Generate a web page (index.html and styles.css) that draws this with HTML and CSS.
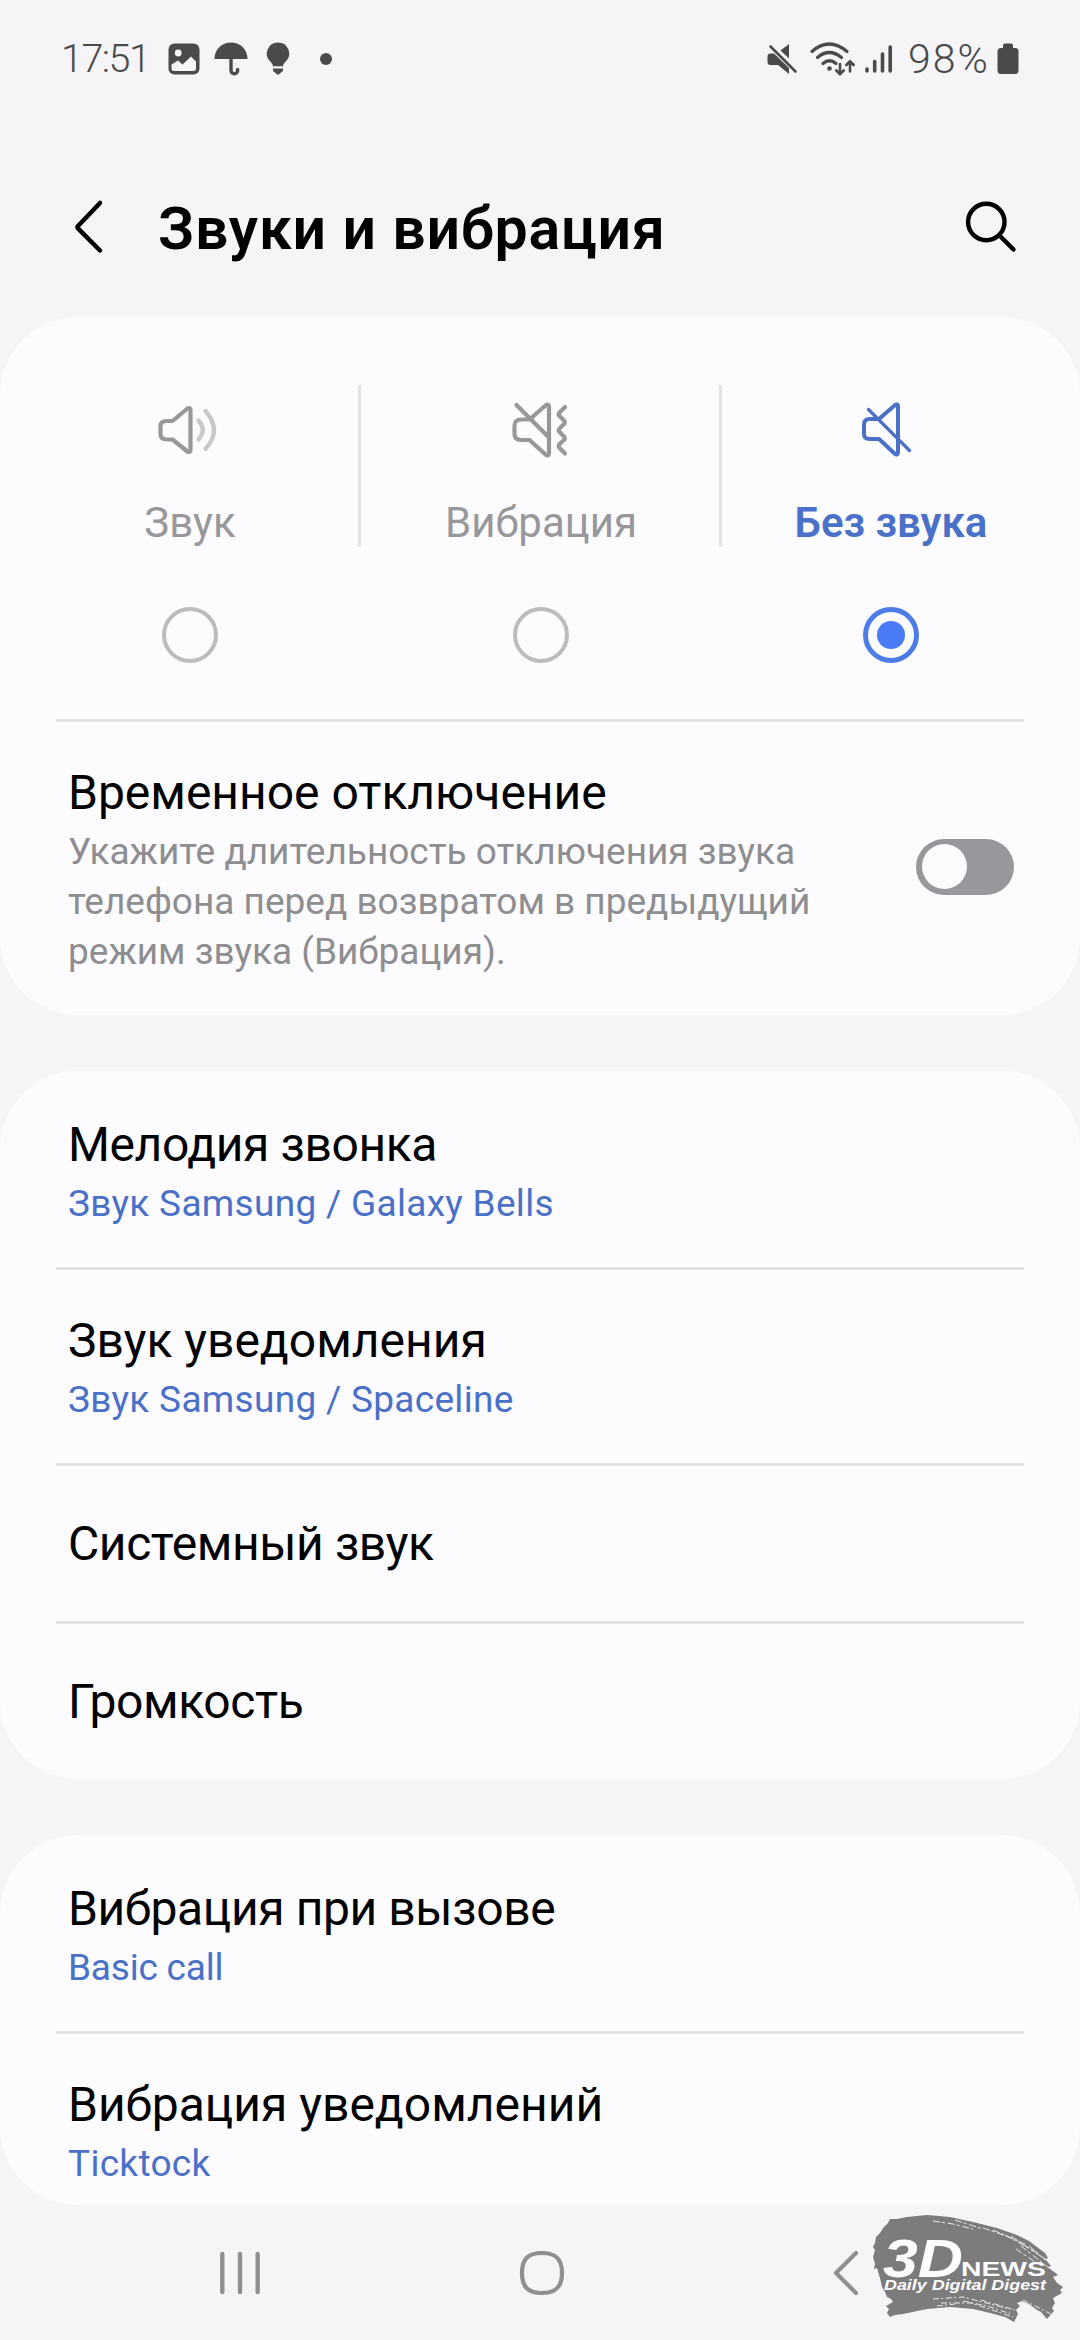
FILE: index.html
```
<!DOCTYPE html>
<html lang="ru">
<head>
    <meta charset="UTF-8">
    <meta name="viewport" content="width=device-width, initial-scale=1.0">
    <title>Звуки и вибрация</title>
    <link rel="stylesheet" href="styles.css">
</head>
<body>
    <div class="status-bar">
        <div class="status-left">
            <span class="status-time">17:51</span>
            <svg class="icon-image" width="32" height="32" viewBox="0 0 32 32">
                <rect x="0.5" y="0.5" width="31" height="31" rx="6" fill="#4a4a4a"/>
                <circle cx="10.2" cy="10" r="3.4" fill="#f5f5f7"/>
                <path d="M3.5 21.5L10 17.500l4.500 4L23 13.500l5 5v7a2.500 2.500 0 0 1-2.500 2.500h-19.500a2.500 2.500 0 0 1-2.500-2.500z" fill="#f5f5f7"/>
            </svg>
            <svg class="icon-umbrella" width="34" height="34" viewBox="0 0 34 34">
                <path d="M0.500 17C0.500 7 8 0.500 17 0.500S33.500 7 33.500 17z" fill="#4a4a4a"/>
                <path d="M17 16v12.500a3.300 3.300 0 0 0 6.600 0v-1" fill="none" stroke="#4a4a4a" stroke-width="3.4" stroke-linecap="round"/>
            </svg>
            <svg class="icon-bulb" width="24" height="34" viewBox="0 0 24 34">
                <path d="M12 0.500a11 11 0 0 1 7.500 19.200q-2.500 2.300-2.500 4.500H7q0-2.200-2.500-4.500A11 11 0 0 1 12 0.500z" fill="#4a4a4a"/>
                <path d="M7 26.500h10v2.500l-5 4-5-4z" fill="#4a4a4a"/>
            </svg>
            <span class="status-dot"></span>
        </div>
        <div class="status-right">
            <svg class="icon-muted" width="32" height="32" viewBox="0 0 32 32">
                <path d="M0.500 13.500q0-3 3-3H7L22 25v6L11 22H3.500q-3 0-3-3zM13.500 7.500L22 1v14.500z" fill="#4a4a4a"/>
                <path d="M3.500 3.500L28.500 28.500" stroke="#4a4a4a" stroke-width="2.600" stroke-linecap="round"/>
            </svg>
            <svg class="icon-wifi" width="46" height="34" viewBox="0 0 46 34" fill="none" stroke="#4a4a4a" stroke-width="3.200" stroke-linecap="round">
                <path d="M2 9.500Q19-5.500 37 9.500M7.500 15.500Q19 5.500 31.500 15.500M13 21.500Q19.500 16 26 21.500"/>
                <circle cx="19.500" cy="26.500" r="2.300" fill="#4a4a4a" stroke="none"/>
                <path d="M30 22v10M26.300 28.500l3.700 3.700 3.700-3.700M40 29.500V19.500M36.300 23l3.700-3.700L43.700 23" stroke-width="2.600"/>
            </svg>
            <svg class="icon-signal" width="28" height="32" viewBox="0 0 28 32" fill="none" stroke="#4a4a4a" stroke-width="3.600" stroke-linecap="round">
                <path d="M2 26v2M9.700 18.500V28M17.500 11v17M25.200 4v24"/>
            </svg>
            <span class="status-percent">98%</span>
            <svg class="icon-battery" width="22" height="32" viewBox="0 0 22 32">
                <path d="M6 2.500Q6 0.500 8 0.500h6Q16 0.500 16 2.500V5H18Q21.500 5 21.500 8.500V27.500Q21.500 31 18 31H4Q0.500 31 0.500 27.500V8.500Q0.500 5 4 5h2z" fill="#4a4a4a"/>
            </svg>
        </div>
    </div>

    <header>
        <svg class="icon-back" width="30" height="54" viewBox="0 0 30 54" fill="none" stroke="#000" stroke-width="4.500" stroke-linecap="round" stroke-linejoin="round">
            <path d="M26 3L4 26q-1 1.200 0 2.400L26 50.500"/>
        </svg>
        <h1>Звуки и вибрация</h1>
        <svg class="icon-search" width="52" height="52" viewBox="0 0 52 52" fill="none" stroke="#000" stroke-width="4.400" stroke-linecap="round">
            <circle cx="21.300" cy="21" r="18.200"/>
            <path d="M35 35l13.500 13.500"/>
        </svg>
    </header>

    <main>
        <section class="card">
            <div class="modes">
                <div class="mode">
                    <svg class="mode-icon" width="60" height="60" viewBox="0 0 60 60" fill="none" stroke="#98989c" stroke-width="4.200" stroke-linecap="round" stroke-linejoin="round">
                        <path d="M12.500 21H7Q0.500 21 0.500 26v8q0 5.500 6.500 5.500h5.500L27.500 51.500Q30.500 53 30.500 50V10Q30.500 7 27.500 8.500z"/>
                        <path d="M38.500 20.500q8.500 9.500 0 19M45.500 11q17 19 0 38" stroke="#c8c8cb"/>
                    </svg>
                    <span class="mode-label">Звук</span>
                    <span class="radio"></span>
                </div>
                <div class="mode-divider"></div>
                <div class="mode">
                    <svg class="mode-icon" width="60" height="60" viewBox="0 0 60 60" fill="none" stroke="#98989c" stroke-width="4.200" stroke-linecap="round" stroke-linejoin="round">
                        <path d="M18.500 19.500H10Q3.500 19.500 3.500 26v7.500q0 6.500 6.500 6.500h8.500L34.500 54.500Q38 57 38 53V7q0-4-3.500-1.500zM5.500 5L38 37.500"/>
                        <path d="M54 7l-5.500 5.500q-1.500 1.800 0 3.500L53 20.500q1.500 2 0 3.500L48.500 28.500q-1.500 2 0 3.500L53 36.500q1.500 2 0 3.500L48.500 44q-1.500 2 0 4L54 53.500"/>
                    </svg>
                    <span class="mode-label">Вибрация</span>
                    <span class="radio"></span>
                </div>
                <div class="mode-divider"></div>
                <div class="mode active">
                    <svg class="mode-icon" width="60" height="60" viewBox="2 0 60 60" fill="none" stroke="#4a70c8" stroke-width="4" stroke-linecap="round" stroke-linejoin="round">
                        <path d="M20 19H10.500Q5 19 5 24.500V34q0 5 5.500 5H20L35.500 53.500Q39 56 39 52V6.500Q39 3 35.500 5.500z"/>
                        <path d="M9.500 9.500L50.500 50.500" stroke-width="3.200"/>
                    </svg>
                    <span class="mode-label">Без звука</span>
                    <span class="radio"></span>
                </div>
            </div>
            <div class="row row-switch">
                <div class="row-text">
                    <div class="title">Временное отключение</div>
                    <div class="description">Укажите длительность отключения звука<br>телефона перед возвратом в предыдущий<br>режим звука (Вибрация).</div>
                </div>
                <div class="switch"><span class="knob"></span></div>
            </div>
        </section>

        <section class="card">
            <div class="row">
                <div class="title tight">Мелодия звонка</div>
                <div class="value">Звук Samsung / Galaxy Bells</div>
            </div>
            <div class="row">
                <div class="title">Звук уведомления</div>
                <div class="value">Звук Samsung / Spaceline</div>
            </div>
            <div class="row single">
                <div class="title tight">Системный звук</div>
            </div>
            <div class="row single">
                <div class="title tight">Громкость</div>
            </div>
        </section>

        <section class="card card-cut">
            <div class="row">
                <div class="title tight">Вибрация при вызове</div>
                <div class="value tight">Basic call</div>
            </div>
            <div class="row">
                <div class="title">Вибрация уведомлений</div>
                <div class="value">Ticktock</div>
            </div>
        </section>
    </main>

    <nav>
        <svg class="nav-recents" width="44" height="48" viewBox="0 0 44 48" stroke="#8f8f8f" stroke-width="4.400" stroke-linecap="round">
            <path d="M4.300 5v38M22 5v38M39.700 5v38"/>
        </svg>
        <svg class="nav-home" width="46" height="48" viewBox="0 0 46 48" fill="none" stroke="#8f8f8f" stroke-width="4.200">
            <path d="M23 4C37 4 43 10 43 24S37 44 23 44 3 38 3 24 9 4 23 4z"/>
        </svg>
        <svg class="nav-back" width="28" height="48" viewBox="0 0 28 48" fill="none" stroke="#8f8f8f" stroke-width="4.200" stroke-linecap="round" stroke-linejoin="round">
            <path d="M24 4L4 24l20 20"/>
        </svg>
    </nav>

    <svg class="watermark" width="200" height="120" viewBox="0 0 200 120">
        <!-- brush stroke -->
        <path d="M19 9L26 9 36 7 56 5 79 7 102 12 126 18 146 25 158 31 166 37 174 43 177 48 174 49 180 56 177 57 187 65 182 67 186 73 192 77 189 80 191 83 182 88 184 93 181 98 183 101 176 109 170 102 166 100 158 94 151 91 146 93 149 96 145 100 147 104 143 112 134 107 119 103 102 99 79 97 56 99 32 104 24 105 19 107 16 103 18 99 15 96 22 92 20 89 16 87 14 82 11 77 9 68 8 65 6 58 3 59 4 54 2 47 4 40 2 37 4 33 5 27 9 23 12 18 17 13z" fill="#7c7c7c"/>
        <path d="M62 11l20 3 20 5M84 10l28 9M112 18l26 9M122 20l32 14M134 25l34 19M140 26l34 23M150 36l32 25M145 39l22 15M158 36l18 15" fill="none" stroke="#f5f5f7" stroke-width="0.900" stroke-dasharray="7 2 3 3"/>
        <path d="M62 89l30-2 46 12M70 93l30 0 42 14M92 91l24 5 24 8M66 96l18-2M110 90l34 10M152 90l28 14" fill="none" stroke="#f5f5f7" stroke-width="0.900" stroke-dasharray="6 2 2 3"/>
        <text class="mark-3d" x="12" y="67" textLength="80" lengthAdjust="spacingAndGlyphs">3D</text>
        <text class="mark-news" x="90" y="66" textLength="85" lengthAdjust="spacingAndGlyphs">NEWS</text>
        <text class="mark-tag" x="13" y="80" textLength="162" lengthAdjust="spacingAndGlyphs">Daily Digital Digest</text>
    </svg>
</body>
</html>
```
FILE: styles.css
```
* {
    margin: 0;
    padding: 0;
    box-sizing: border-box;
}

body {
    position: relative;
    display: flex;
    flex-direction: column;
    width: 1080px;
    height: 2340px;
    overflow: hidden;
    background: #f5f5f7;
    color: #000;
    font-family: Roboto, "Noto Sans", sans-serif;
}

svg {
    display: block;
    flex-shrink: 0;
    overflow: visible;
}

/* Status bar */
.status-bar {
    display: flex;
    justify-content: space-between;
    height: 118px;
    padding: 0 61px;
    color: #4a4a4a;
    font-size: 39.500px;
    font-weight: 350;
    line-height: 118px;
}

.status-left,
.status-right {
    display: flex;
    align-items: center;
}

.status-time {
    width: 107px;
    letter-spacing: -1.500px;
}

.icon-umbrella {
    margin-left: 14px;
}

.icon-bulb {
    margin-left: 18px;
}

.status-dot {
    width: 12px;
    height: 12px;
    margin-left: 30px;
    border-radius: 50%;
    background: #4a4a4a;
}

.icon-wifi {
    margin-left: 11px;
}

.icon-signal {
    margin-left: 9px;
}

.status-percent {
    width: 89px;
    margin-left: 15px;
    font-size: 41px;
    letter-spacing: 2px;
}

/* Page header */
header {
    display: flex;
    align-items: center;
    height: 199px;
    padding: 19px 63px 0 74px;
}

h1 {
    flex: 1;
    margin-left: 54px;
    padding-top: 3px;
    font-size: 59px;
    font-weight: 600;
    letter-spacing: 0.800px;
    line-height: 68px;
}

/* Cards */
main {
    display: flex;
    flex-direction: column;
    gap: 56px;
}

.card {
    border-radius: 78px;
    background: #fcfcfe;
}

.modes {
    display: flex;
    justify-content: center;
    height: 402px;
    padding-top: 68px;
}

.mode {
    display: flex;
    flex-direction: column;
    align-items: center;
    width: 338px;
    padding-top: 15px;
    padding-left: 2px;
    color: #98989a;
}

.mode-divider {
    width: 3px;
    height: 162px;
    background: #e3e3e5;
}

.mode-divider + .mode {
    width: 358px;
}

.mode-divider + .mode.active {
    width: 338px;
    padding-left: 0;
    color: #4a70c8;
}

.mode-label {
    margin-top: 38px;
    font-size: 42px;
    line-height: 50px;
}

.active .mode-label {
    font-weight: 600;
}

.radio {
    display: flex;
    align-items: center;
    justify-content: center;
    width: 56px;
    height: 56px;
    margin-top: 59px;
    border: 4px solid #bcbcc0;
    border-radius: 50%;
}

.active .radio {
    border: 5.500px solid #4d7ce8;
}

.active .radio::after {
    content: "";
    width: 28px;
    height: 28px;
    border-radius: 50%;
    background: #4a7bf7;
}

.row {
    margin: 0 56px;
    padding: 43px 12px 38px;
    border-top: 3px solid #e3e3e5;
}

.row:first-child {
    padding-top: 46px;
    border-top: none;
}

.row.single {
    padding: 50px 12px 49px;
}

.row-switch {
    display: flex;
    align-items: center;
    justify-content: space-between;
    padding-right: 10px;
}

.card-cut .row:last-child {
    padding-bottom: 16px;
}

.title {
    font-size: 48px;
    line-height: 56px;
}

.title.tight {
    letter-spacing: -0.400px;
}

.description,
.value {
    margin-top: 6px;
    font-size: 37px;
    line-height: 50px;
}

.description {
    color: #8e8e90;
}

.value {
    color: #4a70c8;
    letter-spacing: 0.300px;
}

.value.tight {
    letter-spacing: -0.200px;
}

.switch {
    width: 98px;
    height: 56px;
    margin-bottom: 9px;
    padding: 5px 6px;
    border-radius: 28px;
    background: #98989c;
}

.knob {
    display: block;
    width: 45px;
    height: 45px;
    border-radius: 50%;
    background: #fcfcfe;
}

/* Navigation bar */
nav {
    display: flex;
    align-items: center;
    flex: 1;
    padding-left: 218px;
}

.nav-home {
    margin-left: 257px;
}

.nav-back {
    margin-left: 267px;
}

/* Logo lies over the navigation bar */
.watermark {
    position: absolute;
    left: 871px;
    top: 2210px;
    fill: #fcfcfe;
    font-family: "Liberation Sans", sans-serif;
}

.mark-3d {
    font-size: 53px;
    font-weight: bold;
    font-style: italic;
}

.mark-news {
    font-size: 20px;
    font-weight: bold;
}

.mark-tag {
    font-size: 14px;
    font-weight: bold;
    font-style: italic;
}
```
